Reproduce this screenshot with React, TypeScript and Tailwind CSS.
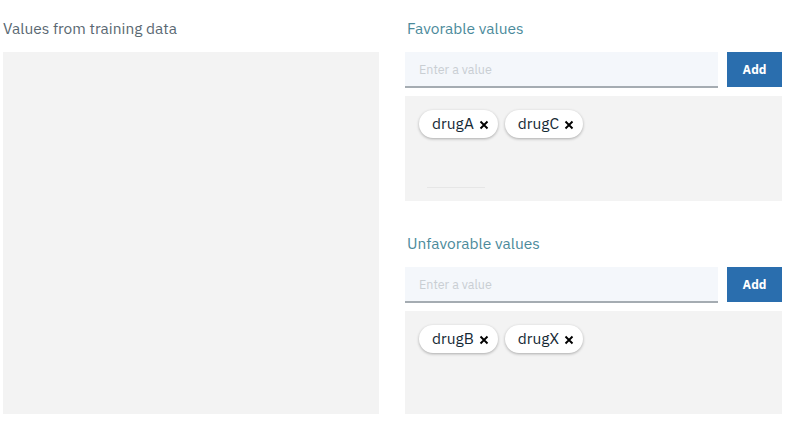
import React from "react";

const font = { fontFamily: '"IBM Plex Sans", "Noto Sans", "Open Sans", sans-serif' };

function Tag({ label }: { label: string }) {
  return (
    <div className="flex h-[28px] items-center rounded-full bg-white pl-[13px] pr-[9px] shadow-[0_1px_3px_rgba(0,0,0,0.3)]">
      <span className="text-[15.5px] text-[#152935]">{label}</span>
      <svg width="10" height="10" viewBox="0 0 10 10" className="ml-[5px] mt-[2px]">
        <path d="M1.5 1.5 L8.5 8.5 M8.5 1.5 L1.5 8.5" stroke="#000" strokeWidth="1.9" />
      </svg>
    </div>
  );
}

function Section({ title, tags, line, boxH }: { title: string; tags: string[]; line?: boolean; boxH: string }) {
  return (
    <div className="flex flex-col">
      <div className="h-[24px] pl-[2px] text-[15.5px] leading-[24px] text-[#4b8a9b]">{title}</div>
      <div className="mt-[12px] flex gap-[9px]">
        <div className="flex h-[36px] flex-1 items-center border-b-2 border-[#a5acb2] bg-[#f4f7fb] pl-[14px] text-[12.5px] text-[#c9ced3]">
          Enter a value
        </div>
        <div className="flex h-[35px] w-[55px] items-center justify-center bg-[#2a6eae] text-[12.5px] font-bold text-white">
          Add
        </div>
      </div>
      <div className={`mt-[8px] flex flex-col bg-[#f3f3f3] px-[14px] pt-[14px] ${boxH}`}>
        <div className="flex gap-[7px]">
          {tags.map((t) => (
            <Tag key={t} label={t} />
          ))}
        </div>
        {line && <div className="ml-[8px] mt-[49px] h-px w-[58px] bg-[#e6e6e6]" />}
      </div>
    </div>
  );
}

export default function App() {
  return (
    <div className="flex h-[421px] w-[793px] bg-white pt-[16px]" style={font}>
      <div className="ml-[3px] flex w-[376px] flex-col">
        <div className="h-[24px] text-[15.5px] leading-[24px] text-[#5a6872]">Values from training data</div>
        <div className="mt-[12px] h-[362px] bg-[#f3f3f3]" />
      </div>
      <div className="ml-[26px] flex w-[377px] flex-col gap-[30px]">
        <Section title="Favorable values" tags={["drugA", "drugC"]} line boxH="h-[105px]" />
        <Section title="Unfavorable values" tags={["drugB", "drugX"]} boxH="h-[103px]" />
      </div>
    </div>
  );
}
